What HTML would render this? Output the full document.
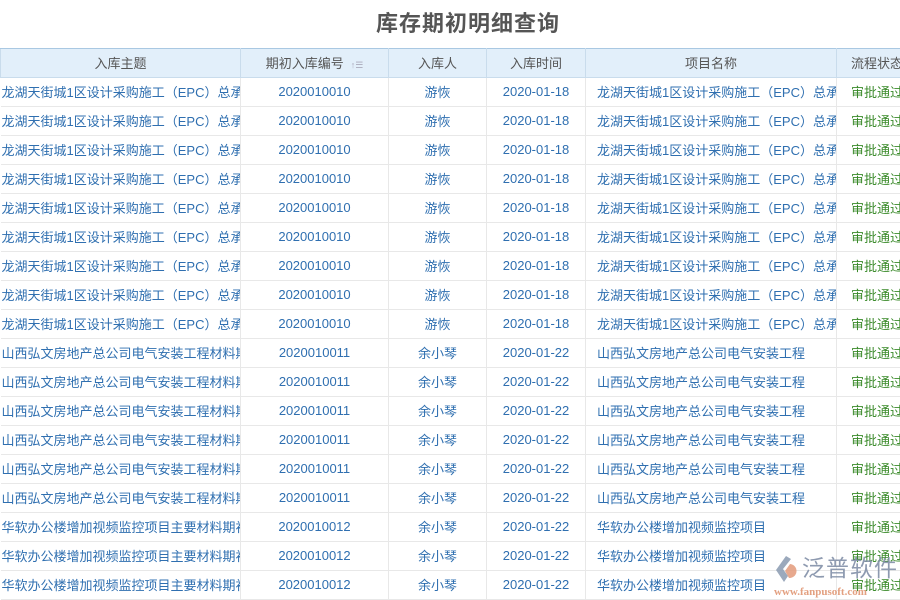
<!DOCTYPE html>
<html><head><meta charset="utf-8"><style>
*{margin:0;padding:0;box-sizing:border-box}
body{width:900px;height:600px;overflow:hidden;background:#fff;font-family:"Liberation Sans","Noto Sans CJK SC",sans-serif;position:relative}
h1{position:absolute;top:6px;left:0;width:936px;text-align:center;font-size:22px;color:#555;font-weight:bold;letter-spacing:1px}
table{position:absolute;top:48px;left:0;border-collapse:collapse;table-layout:fixed;width:920px}
th{height:29px;background:#e2effa;color:#555;font-weight:normal;font-size:13px;border:1px solid #c9dcec;border-top:1px solid #a9c8e2;text-align:center;padding-bottom:1px}
td{height:29px;font-size:13px;color:#2f6fb0;border-bottom:1px solid #e8e8e8;border-right:1px solid #e8e8e8;text-align:center;white-space:nowrap;overflow:hidden;padding-bottom:2px}
td.l{text-align:left;padding-left:1px}
td.p{text-align:left;padding-left:11px}
td.g{color:#3a8a2a;text-align:left;padding-left:14px}
.sort{color:#aab;font-size:9px;margin-left:7px}
.logo{position:absolute;left:770px;top:550px;width:130px;height:50px;white-space:nowrap}
</style></head><body>
<h1>库存期初明细查询</h1>
<table>
<colgroup><col style="width:240px"><col style="width:148px"><col style="width:98px"><col style="width:99px"><col style="width:251px"><col style="width:84px"></colgroup>
<tr><th>入库主题</th><th>期初入库编号<span class="sort">↑☰</span></th><th>入库人</th><th>入库时间</th><th>项目名称</th><th style="text-align:left;padding-left:14px">流程状态</th></tr>
<tr><td class="l">龙湖天街城1区设计采购施工（EPC）总承包</td><td>2020010010</td><td>游恢</td><td>2020-01-18</td><td class="p">龙湖天街城1区设计采购施工（EPC）总承包</td><td class="g">审批通过</td></tr>
<tr><td class="l">龙湖天街城1区设计采购施工（EPC）总承包</td><td>2020010010</td><td>游恢</td><td>2020-01-18</td><td class="p">龙湖天街城1区设计采购施工（EPC）总承包</td><td class="g">审批通过</td></tr>
<tr><td class="l">龙湖天街城1区设计采购施工（EPC）总承包</td><td>2020010010</td><td>游恢</td><td>2020-01-18</td><td class="p">龙湖天街城1区设计采购施工（EPC）总承包</td><td class="g">审批通过</td></tr>
<tr><td class="l">龙湖天街城1区设计采购施工（EPC）总承包</td><td>2020010010</td><td>游恢</td><td>2020-01-18</td><td class="p">龙湖天街城1区设计采购施工（EPC）总承包</td><td class="g">审批通过</td></tr>
<tr><td class="l">龙湖天街城1区设计采购施工（EPC）总承包</td><td>2020010010</td><td>游恢</td><td>2020-01-18</td><td class="p">龙湖天街城1区设计采购施工（EPC）总承包</td><td class="g">审批通过</td></tr>
<tr><td class="l">龙湖天街城1区设计采购施工（EPC）总承包</td><td>2020010010</td><td>游恢</td><td>2020-01-18</td><td class="p">龙湖天街城1区设计采购施工（EPC）总承包</td><td class="g">审批通过</td></tr>
<tr><td class="l">龙湖天街城1区设计采购施工（EPC）总承包</td><td>2020010010</td><td>游恢</td><td>2020-01-18</td><td class="p">龙湖天街城1区设计采购施工（EPC）总承包</td><td class="g">审批通过</td></tr>
<tr><td class="l">龙湖天街城1区设计采购施工（EPC）总承包</td><td>2020010010</td><td>游恢</td><td>2020-01-18</td><td class="p">龙湖天街城1区设计采购施工（EPC）总承包</td><td class="g">审批通过</td></tr>
<tr><td class="l">龙湖天街城1区设计采购施工（EPC）总承包</td><td>2020010010</td><td>游恢</td><td>2020-01-18</td><td class="p">龙湖天街城1区设计采购施工（EPC）总承包</td><td class="g">审批通过</td></tr>
<tr><td class="l">山西弘文房地产总公司电气安装工程材料期初</td><td>2020010011</td><td>余小琴</td><td>2020-01-22</td><td class="p">山西弘文房地产总公司电气安装工程</td><td class="g">审批通过</td></tr>
<tr><td class="l">山西弘文房地产总公司电气安装工程材料期初</td><td>2020010011</td><td>余小琴</td><td>2020-01-22</td><td class="p">山西弘文房地产总公司电气安装工程</td><td class="g">审批通过</td></tr>
<tr><td class="l">山西弘文房地产总公司电气安装工程材料期初</td><td>2020010011</td><td>余小琴</td><td>2020-01-22</td><td class="p">山西弘文房地产总公司电气安装工程</td><td class="g">审批通过</td></tr>
<tr><td class="l">山西弘文房地产总公司电气安装工程材料期初</td><td>2020010011</td><td>余小琴</td><td>2020-01-22</td><td class="p">山西弘文房地产总公司电气安装工程</td><td class="g">审批通过</td></tr>
<tr><td class="l">山西弘文房地产总公司电气安装工程材料期初</td><td>2020010011</td><td>余小琴</td><td>2020-01-22</td><td class="p">山西弘文房地产总公司电气安装工程</td><td class="g">审批通过</td></tr>
<tr><td class="l">山西弘文房地产总公司电气安装工程材料期初</td><td>2020010011</td><td>余小琴</td><td>2020-01-22</td><td class="p">山西弘文房地产总公司电气安装工程</td><td class="g">审批通过</td></tr>
<tr><td class="l">华软办公楼增加视频监控项目主要材料期初</td><td>2020010012</td><td>余小琴</td><td>2020-01-22</td><td class="p">华软办公楼增加视频监控项目</td><td class="g">审批通过</td></tr>
<tr><td class="l">华软办公楼增加视频监控项目主要材料期初</td><td>2020010012</td><td>余小琴</td><td>2020-01-22</td><td class="p">华软办公楼增加视频监控项目</td><td class="g">审批通过</td></tr>
<tr><td class="l">华软办公楼增加视频监控项目主要材料期初</td><td>2020010012</td><td>余小琴</td><td>2020-01-22</td><td class="p">华软办公楼增加视频监控项目</td><td class="g">审批通过</td></tr>
</table>
<div class="logo">
<svg width="30" height="30" viewBox="0 0 30 30" style="position:absolute;left:2px;top:4px">
<path d="M14 2 L4 16 L12 28 L16 22 L11 15 L19 5 Z" fill="#8a9ab0" opacity="0.85"/>
<path d="M18 10 A7 7 0 1 1 17 24 L13 17 Z" fill="#e39a7a" opacity="0.85"/>
</svg>
<div style="position:absolute;left:32px;top:2px;font-size:23px;line-height:28px;color:#8290a8;opacity:0.9;letter-spacing:1px;font-family:'Noto Sans CJK SC',sans-serif">泛普软件</div>
<div style="position:absolute;left:4px;top:36px;font-size:11px;color:#e3a080;font-family:'Liberation Serif',serif;font-weight:bold">www.fanpusoft.com</div>
</div>
</body></html>
